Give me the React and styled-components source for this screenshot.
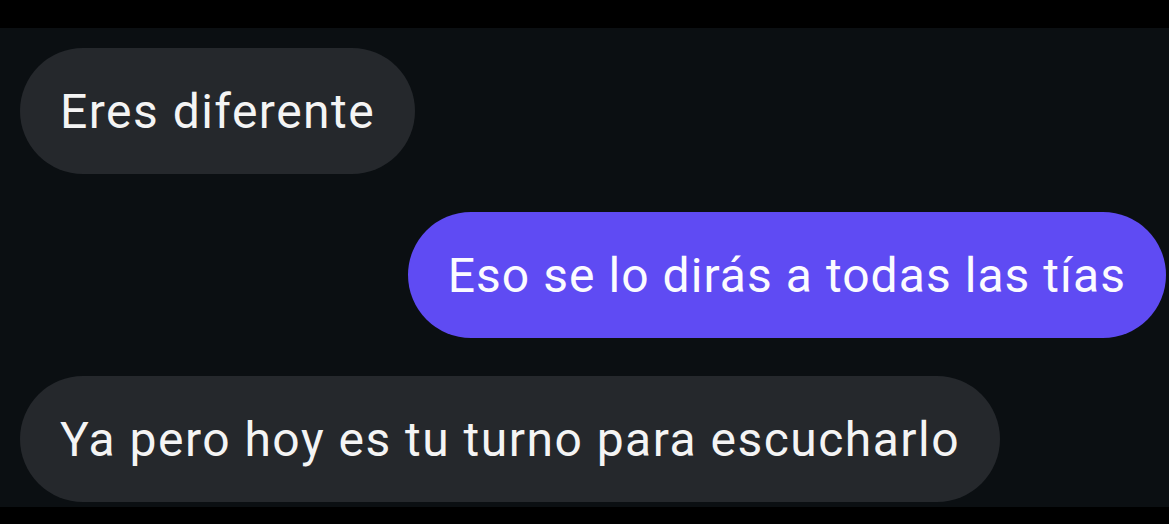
import React from "react";
import styled, { createGlobalStyle, css } from "styled-components";

const GlobalStyle = createGlobalStyle`
  html, body {
    margin: 0;
    padding: 0;
    background: #000;
  }
  body {
    width: 1169px;
    height: 524px;
    overflow: hidden;
    font-family: Roboto, "Liberation Sans", sans-serif;
  }
`;

const messages = [
  { id: 1, text: "Eres diferente", mine: false },
  { id: 2, text: "Eso se lo dirás a todas las tías", mine: true },
  { id: 3, text: "Ya pero hoy es tu turno para escucharlo", mine: false },
];

const App = () => {
  return (
    <>
      <GlobalStyle />
      <Screen>
        <TopBar />
        <Thread>
          {messages.map((m) => (
            <Row key={m.id} mine={m.mine}>
              <Bubble mine={m.mine}>{m.text}</Bubble>
            </Row>
          ))}
        </Thread>
        <BottomBar />
      </Screen>
    </>
  );
};

const Screen = styled.div`
  display: flex;
  flex-direction: column;
  width: 1169px;
  height: 524px;
  background: #000;
`;

const TopBar = styled.div`
  height: 28px;
  background: #000;
  flex-shrink: 0;
`;

const BottomBar = styled.div`
  flex: 1;
  background: #000;
`;

const Thread = styled.div`
  display: flex;
  flex-direction: column;
  gap: 38px;
  height: 479px;
  padding: 20px 3px 0 20px;
  box-sizing: border-box;
  background: #0b0f12;
`;

const Row = styled.div`
  display: flex;
  justify-content: ${({ mine }) => (mine ? "flex-end" : "flex-start")};
`;

const Bubble = styled.div`
  display: flex;
  align-items: center;
  height: 126px;
  box-sizing: border-box;
  padding: 0 40px;
  border-radius: 63px;
  background: #25282c;
  color: #f4f4f4;
  font-size: 48px;
  font-weight: 400;
  letter-spacing: 1.48px;
  white-space: nowrap;

  ${({ mine }) =>
    mine &&
    css`
      background: #5f4bf3;
      color: #fbfbff;
      letter-spacing: 1.05px;
    `}
`;

export default App;
